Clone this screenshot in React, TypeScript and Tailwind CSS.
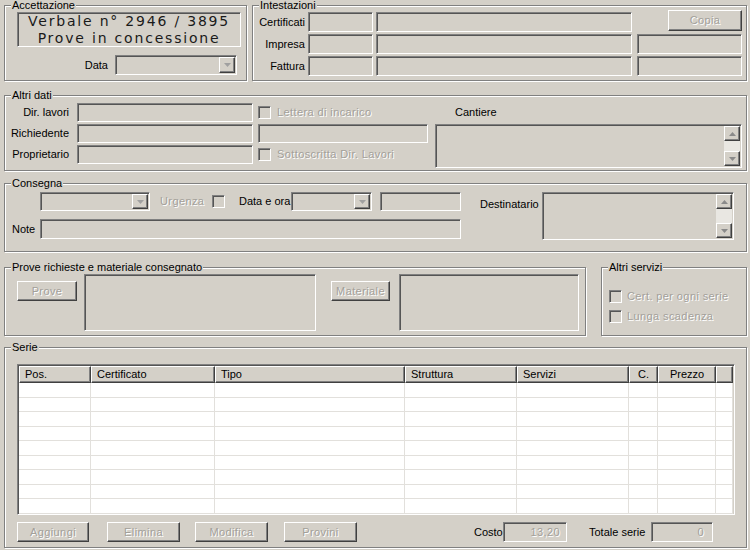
import React from 'react';

const sunk = "border border-t-[#808080] border-l-[#808080] border-r-white border-b-white shadow-[inset_1px_1px_0_#555555] bg-[#d4d0c8]";
const raised = "border border-t-white border-l-white border-r-[#404040] border-b-[#404040] shadow-[inset_-1px_-1px_0_#808080] bg-[#d4d0c8]";
const dim = "text-[#a3a09a] tracking-[0.4px] [text-shadow:1px_1px_0_#ffffff]";

function Arrow({ up = false, color = "#a0a0a0" }: { up?: boolean; color?: string }) {
  return (
    <svg width="7" height="4" viewBox="0 0 7 4">
      <polygon points={up ? "0,4 7,4 3.5,0" : "0,0 7,0 3.5,4"} fill={color} />
    </svg>
  );
}

function Group({ title, className = "", children }: { title: string; className?: string; children?: React.ReactNode }) {
  return (
    <fieldset className={`border border-[#808080] shadow-[inset_1px_1px_0_#ffffff,1px_1px_0_#ffffff] ${className}`}>
      <legend className="ml-[6px] px-[1px] text-[11px] leading-[11px] bg-[#d4d0c8]">{title}</legend>
      {children}
    </fieldset>
  );
}

function Combo({ className }: { className: string }) {
  return (
    <div className={`${sunk} flex justify-end p-[1px] ${className}`}>
      <div className={`${raised} w-[16px] h-full flex items-center justify-center`}>
        <Arrow />
      </div>
    </div>
  );
}

function Check() {
  return <span className={`${sunk} w-[13px] h-[13px] shrink-0`} />;
}

function Btn({ label, className }: { label: string; className: string }) {
  return <div className={`${raised} ${dim} flex items-center justify-center shrink-0 ${className}`}>{label}</div>;
}

function Memo({ className }: { className: string }) {
  return (
    <div className={`${sunk} flex justify-end p-[1px] ${className}`}>
      <div className="w-[16px] h-full flex flex-col bg-[#e9e7e2]">
        <div className={`${raised} h-[15px] flex items-center justify-center`}><Arrow up color="#8a8a8a" /></div>
        <div className="flex-1" />
        <div className={`${raised} h-[15px] flex items-center justify-center`}><Arrow color="#8a8a8a" /></div>
      </div>
    </div>
  );
}

const cols = [
  { name: "Pos.", w: "w-[72px]", c: false },
  { name: "Certificato", w: "w-[124px]", c: false },
  { name: "Tipo", w: "w-[190px]", c: false },
  { name: "Struttura", w: "w-[112px]", c: false },
  { name: "Servizi", w: "w-[112px]", c: false },
  { name: "C.", w: "w-[29px]", c: true },
  { name: "Prezzo", w: "w-[58px]", c: true },
  { name: "", w: "flex-1", c: false },
];

export default function App() {
  const rows = [0, 1, 2, 3, 4, 5, 6, 7, 8];
  return (
    <div className="w-[750px] h-[550px] overflow-hidden bg-[#d4d0c8] pl-[4px] pr-[3px] font-['Liberation_Sans',Arial,sans-serif] text-[11px] text-black">
      {/* riga superiore */}
      <div className="flex gap-[5px]">
        <Group title="Accettazione" className="w-[243px] h-[81px]">
          <div className={`${sunk} ml-[12px] mt-[1px] w-[224px] h-[35px] flex flex-col items-center justify-center font-['DejaVu_Sans',sans-serif] text-[14px] leading-[16.5px] tracking-[1.8px] text-[#1a1a1a]`}>
            <span>Verbale n° 2946 / 3895</span>
            <span>Prove in concessione</span>
          </div>
          <div className="flex items-center justify-end gap-[7px] pr-[9px] mt-[8px]">
            <span>Data</span>
            <Combo className="w-[122px] h-[20px]" />
          </div>
        </Group>

        <Group title="Intestazioni" className="flex-1 h-[81px]">
          <div className="flex flex-col gap-[2px] mt-[1px]">
            <div className="flex items-center h-[20px]">
              <span className="w-[52px] text-right">Certificati</span>
              <div className={`${sunk} ml-[3px] w-[65px] h-full`} />
              <div className={`${sunk} ml-[3px] w-[256px] h-full`} />
              <Btn label="Copia" className="ml-[36px] -mt-[3px] w-[74px] h-[21px]" />
            </div>
            <div className="flex items-center h-[20px]">
              <span className="w-[52px] text-right">Impresa</span>
              <div className={`${sunk} ml-[3px] w-[65px] h-full`} />
              <div className={`${sunk} ml-[3px] w-[256px] h-full`} />
              <div className={`${sunk} ml-[5px] w-[105px] h-full`} />
            </div>
            <div className="flex items-center h-[20px]">
              <span className="w-[52px] text-right">Fattura</span>
              <div className={`${sunk} ml-[3px] w-[65px] h-full`} />
              <div className={`${sunk} ml-[3px] w-[256px] h-full`} />
              <div className={`${sunk} ml-[5px] w-[105px] h-full`} />
            </div>
          </div>
        </Group>
      </div>

      {/* altri dati */}
      <Group title="Altri dati" className="mt-[9px] h-[81px]">
        <div className="flex mt-[2px]">
          <div className="flex flex-col gap-[2px]">
            {["Dir. lavori", "Richiedente", "Proprietario"].map((l) => (
              <div key={l} className="flex items-center h-[19px]">
                <span className="w-[64px] text-right">{l}</span>
                <div className={`${sunk} ml-[8px] w-[176px] h-full`} />
              </div>
            ))}
          </div>
          <div className="ml-[5px] w-[170px] flex flex-col gap-[2px]">
            <div className="flex items-center gap-[6px] h-[19px]">
              <Check />
              <span className={dim}>Lettera di incarico</span>
            </div>
            <div className={`${sunk} h-[19px]`} />
            <div className="flex items-center gap-[6px] h-[19px]">
              <Check />
              <span className={dim}>Sottoscritta Dir. Lavori</span>
            </div>
          </div>
          <div className="ml-[7px] flex-1 pr-[4px] flex flex-col">
            <div className="h-[19px] flex items-center pl-[20px]">Cantiere</div>
            <Memo className="mt-[2px] h-[44px]" />
          </div>
        </div>
      </Group>

      {/* consegna */}
      <Group title="Consegna" className="mt-[7px] h-[74px]">
        <div className="flex mt-[3px]">
          <div className="flex flex-col">
            <div className="flex items-center h-[19px]">
              <Combo className="ml-[35px] w-[110px] h-full" />
              <span className={`${dim} ml-[10px] w-[52px]`}>Urgenza</span>
              <Check />
              <span className="ml-[14px] w-[52px]">Data e ora</span>
              <Combo className="w-[81px] h-full" />
              <div className={`${sunk} ml-[8px] w-[81px] h-full`} />
            </div>
            <div className="flex items-center h-[20px] mt-[8px]">
              <span className="w-[35px] pl-[7px]">Note</span>
              <div className={`${sunk} w-[421px] h-full`} />
            </div>
          </div>
          <span className="ml-[19px] w-[62px] pt-[4px]">Destinatario</span>
          <Memo className="w-[192px] h-[48px]" />
        </div>
      </Group>

      {/* prove + altri servizi */}
      <div className="flex mt-[10px]">
        <Group title="Prove richieste e materiale consegnato" className="w-[582px] h-[74px]">
          <div className="flex items-start mt-[1px]">
            <Btn label="Prove" className="ml-[12px] mt-[7px] w-[60px] h-[20px]" />
            <div className={`${sunk} ml-[7px] w-[232px] h-[57px]`} />
            <Btn label="Materiale" className="ml-[15px] mt-[7px] w-[59px] h-[20px]" />
            <div className={`${sunk} ml-[9px] w-[180px] h-[57px]`} />
          </div>
        </Group>
        <Group title="Altri servizi" className="ml-[15px] flex-1 h-[74px]">
          <div className="flex flex-col mt-[13px] ml-[7px]">
            <div className="flex items-center gap-[5px] h-[20px]">
              <Check />
              <span className={dim}>Cert. per ogni serie</span>
            </div>
            <div className="flex items-center gap-[5px] h-[20px]">
              <Check />
              <span className={dim}>Lunga scadenza</span>
            </div>
          </div>
        </Group>
      </div>

      {/* serie */}
      <Group title="Serie" className="mt-[6px] h-[206px]">
        <div className={`${sunk} ml-[12px] mt-[11px] w-[718px] h-[151px] p-[1px] flex flex-col overflow-hidden`}>
          <div className="flex h-[17px] shrink-0">
            {cols.map((c, i) => (
              <div
                key={i}
                className={`${c.w} h-full border border-t-white border-l-white border-r-[#404040] border-b-[#404040] shadow-[inset_-1px_-1px_0_#808080] flex items-center ${c.c ? "justify-center" : "pl-[5px]"}`}
              >
                {c.name}
              </div>
            ))}
          </div>
          <div className="flex-1 bg-white flex flex-col">
            {rows.map((r) => (
              <div key={r} className="flex h-[14.5px] border-b border-[#e2e0dc]">
                {cols.map((c, i) => (
                  <div key={i} className={`${c.w} h-full border-r border-[#e2e0dc]`} />
                ))}
              </div>
            ))}
          </div>
        </div>
        <div className="flex items-center h-[20px] mt-[7px]">
          <Btn label="Aggiungi" className="ml-[12px] w-[72px] h-full" />
          <Btn label="Elimina" className="ml-[18px] w-[73px] h-full" />
          <Btn label="Modifica" className="ml-[15px] w-[73px] h-full" />
          <Btn label="Provini" className="ml-[16px] w-[73px] h-full" />
          <span className="ml-[117px] w-[29px]">Costo</span>
          <div className={`${sunk} ${dim} w-[64px] h-full flex items-center justify-end pr-[6px]`}>13,20</div>
          <span className="ml-[22px] w-[62px]">Totale serie</span>
          <div className={`${sunk} ${dim} w-[62px] h-full flex items-center justify-end pr-[8px]`}>0</div>
        </div>
      </Group>
    </div>
  );
}
